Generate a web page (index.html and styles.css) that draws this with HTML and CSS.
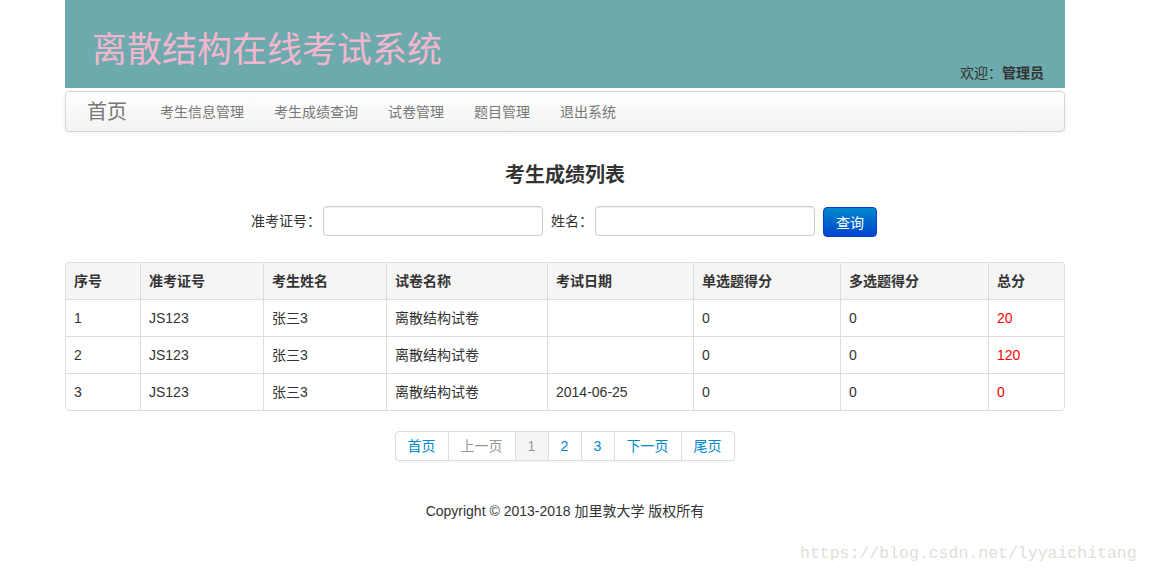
FILE: index.html
```html
<!DOCTYPE html>
<html lang="zh">
<head>
<meta charset="utf-8">
<title>离散结构在线考试系统</title>
<link rel="stylesheet" href="styles.css">
</head>
<body>
<div class="page">
  <div class="container">
    <header class="banner">
      <h1 class="brand-title">离散结构在线考试系统</h1>
      <div class="welcome">欢迎：<b>管理员</b></div>
    </header>
    <nav class="navbar">
      <a class="brand" href="#">首页</a>
      <ul class="nav">
        <li><a href="#">考生信息管理</a></li>
        <li><a href="#">考生成绩查询</a></li>
        <li><a href="#">试卷管理</a></li>
        <li><a href="#">题目管理</a></li>
        <li><a href="#">退出系统</a></li>
      </ul>
    </nav>
    <h2 class="page-title">考生成绩列表</h2>
    <form class="search">
      <label>准考证号：</label><input type="text" class="field">
      <label class="second">姓名：</label><input type="text" class="field">
      <button type="button" class="btn">查询</button>
    </form>
    <table class="grid">
      <thead>
        <tr><th class="c1">序号</th><th class="c2">准考证号</th><th class="c3">考生姓名</th><th class="c4">试卷名称</th><th class="c5">考试日期</th><th class="c6">单选题得分</th><th class="c7">多选题得分</th><th class="c8">总分</th></tr>
      </thead>
      <tbody>
        <tr><td>1</td><td>JS123</td><td>张三3</td><td>离散结构试卷</td><td></td><td>0</td><td>0</td><td class="total">20</td></tr>
        <tr><td>2</td><td>JS123</td><td>张三3</td><td>离散结构试卷</td><td></td><td>0</td><td>0</td><td class="total">120</td></tr>
        <tr><td>3</td><td>JS123</td><td>张三3</td><td>离散结构试卷</td><td>2014-06-25</td><td>0</td><td>0</td><td class="total">0</td></tr>
      </tbody>
    </table>
    <div class="pager-wrap">
      <ul class="pager">
        <li class="w2"><a href="#">首页</a></li>
        <li class="w3 disabled"><span>上一页</span></li>
        <li class="num active"><span>1</span></li>
        <li class="num"><a href="#">2</a></li>
        <li class="num"><a href="#">3</a></li>
        <li class="w3"><a href="#">下一页</a></li>
        <li class="w2"><a href="#">尾页</a></li>
      </ul>
    </div>
    <footer class="footer">Copyright © 2013-2018 加里敦大学 版权所有</footer>
  </div>
</div>
<div class="watermark">https://blog.csdn.net/lyyaichitang</div>
</body>
</html>
```
FILE: styles.css
```css
* { box-sizing: border-box; }
html, body { margin: 0; padding: 0; background: #fff; }
body {
  font-family: "Liberation Sans", "Noto Sans CJK SC", sans-serif;
  font-size: 14px;
  color: #333;
  line-height: 20px;
  height: 573px;
  overflow: hidden;
}
.page { padding-right: 20px; }
.container { width: 1000px; margin: 0 auto; }

.banner {
  background: #6daaad;
  height: 88px;
  position: relative;
  display: flex;
  align-items: flex-end;
  justify-content: space-between;
  padding: 0 20px 5px 27px;
}
.brand-title {
  margin: 0 0 13px;
  font-size: 35px;
  font-weight: normal;
  line-height: 40px;
  color: #f3b6cf;
}
.welcome { font-size: 14px; color: #333; line-height: 20px; margin-right: 1px; }
.welcome b { font-weight: bold; }

.navbar {
  margin-top: 3px;
  height: 41px;
  border: 1px solid #d4d4d4;
  border-radius: 4px;
  background: linear-gradient(#ffffff, #f2f2f2);
  box-shadow: 0 1px 4px rgba(0,0,0,0.065);
  display: flex;
  align-items: center;
  padding-left: 21px;
}
.brand {
  font-size: 20px;
  color: #777;
  text-decoration: none;
  margin-right: 33px;
  line-height: 24px;
}
.nav { list-style: none; margin: 0; padding: 0; display: flex; }
.nav li a {
  display: block;
  color: #777;
  text-decoration: none;
  padding: 0 15px;
  font-size: 14px;
}
.nav li:first-child a { padding-left: 0; }

.page-title {
  text-align: center;
  font-size: 20px;
  font-weight: bold;
  margin: 29px 0 0;
  line-height: 28px;
  color: #333;
}
.search {
  display: flex;
  justify-content: center;
  align-items: center;
  margin-top: 16px;
  padding-right: 2px;
}
.search label { font-size: 14px; color: #333; margin-right: 2px; }
.search label.second { margin-left: 8px; }
.field {
  width: 220px;
  height: 30px;
  border: 1px solid #ccc;
  border-radius: 4px;
  box-shadow: inset 0 1px 1px rgba(0,0,0,0.075);
  margin: 0;
  padding: 4px 6px;
}
.btn {
  margin-left: 8px;
  width: 54px;
  height: 30px;
  border: 1px solid #0044cc;
  border-radius: 4px;
  background: linear-gradient(#0088cc, #0044cc);
  color: #fff;
  font-family: "Liberation Sans", "Noto Sans CJK SC", sans-serif;
  font-size: 14px;
  padding: 0;
  margin-top: 2px;
}

.grid {
  margin-top: 25px;
  width: 1000px;
  border-collapse: separate;
  border-spacing: 0;
  border: 1px solid #ddd;
  border-radius: 4px;
  table-layout: fixed;
}
.grid th, .grid td {
  height: 37px;
  padding: 0 8px;
  text-align: left;
  vertical-align: middle;
  border-left: 1px solid #ddd;
  border-top: 1px solid #ddd;
  font-size: 14px;
}
.grid th:first-child, .grid td:first-child { border-left: 0; }
.grid thead th { border-top: 0; background: #f5f5f5; font-weight: bold; height: 36px; }
.grid thead th:first-child { border-top-left-radius: 4px; }
.grid thead th:last-child { border-top-right-radius: 4px; }
.c1 { width: 74px; }
.c2 { width: 123px; }
.c3 { width: 123px; }
.c4 { width: 161px; }
.c5 { width: 146px; }
.c6 { width: 147px; }
.c7 { width: 148px; }
.grid td.total { color: #f00; }

.pager-wrap { display: flex; justify-content: center; margin-top: 20px; padding-right: 1px; }
.pager {
  list-style: none;
  margin: 0;
  padding: 0;
  display: flex;
  border: 1px solid #ddd;
  border-radius: 4px;
  box-shadow: 0 1px 2px rgba(0,0,0,0.05);
}
.pager li { border-left: 1px solid #ddd; }
.pager li:first-child { border-left: 0; }
.pager li a, .pager li span {
  display: block;
  height: 28px;
  line-height: 28px;
  text-align: center;
  text-decoration: none;
  color: #0088cc;
}
.pager li.w2 a { width: 52px; }
.pager li.w3 a, .pager li.w3 span { width: 66px; }
.pager li.num a, .pager li.num span { width: 32px; }
.pager li.disabled span { color: #999; }
.pager li.active span { color: #999; background: #f5f5f5; }

.footer {
  text-align: center;
  margin-top: 40px;
  font-size: 14px;
  color: #333;
}

.watermark {
  position: absolute;
  left: 800px;
  top: 544px;
  font-family: "Liberation Mono", "DejaVu Sans Mono", monospace;
  font-size: 16.5px;
  color: #e0e0d8;
}
```
